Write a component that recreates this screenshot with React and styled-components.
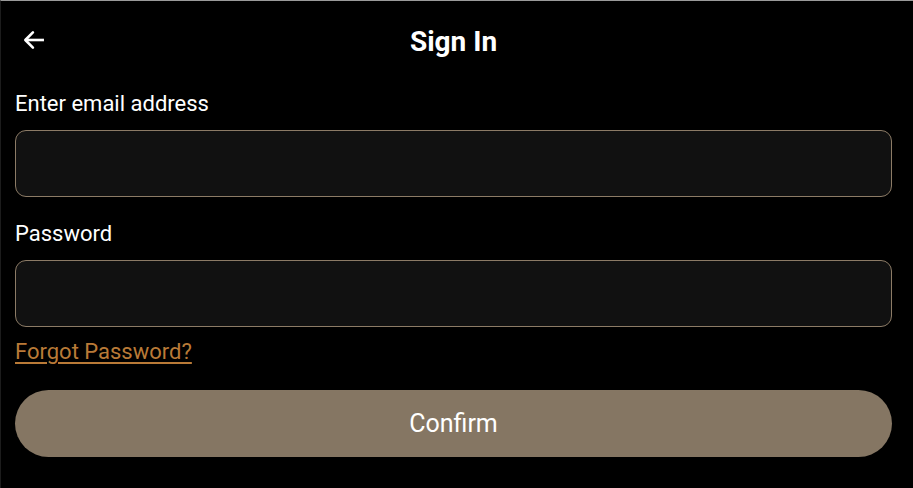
import React from 'react'
import styled, { createGlobalStyle } from 'styled-components'

const GlobalStyle = createGlobalStyle`
  html, body {
    margin: 0;
    padding: 0;
    background: #000;
  }
  body {
    font-family: Roboto, "Noto Sans", sans-serif;
  }
`

const Page = styled.div`
  box-sizing: border-box;
  width: 913px;
  height: 488px;
  background: #000;
  border-top: 1px solid #9a9a9a;
  border-left: 1px solid #1c1c1c;
  padding: 0 21px 0 14px;
  color: #fff;
`

const Header = styled.header`
  position: relative;
  display: flex;
  align-items: center;
  justify-content: center;
  height: 80px;
  margin-bottom: 10px;
`

const BackButton = styled.button`
  position: absolute;
  left: 6px;
  top: 26px;
  background: none;
  border: none;
  padding: 0;
  color: #fff;
  cursor: pointer;
  display: flex;
`

const Title = styled.h1`
  margin: 0;
  font-size: 28px;
  font-weight: 700;
  letter-spacing: 0;
`

const Field = styled.div`
  display: flex;
  flex-direction: column;
  margin-bottom: ${(p) => p.$gap || 0}px;
`

const Label = styled.label`
  font-size: 22px;
  line-height: 26px;
  margin-bottom: 13px;
`

const Input = styled.input`
  box-sizing: border-box;
  width: 100%;
  height: 67px;
  background: #111111;
  border: 1px solid #8c7b66;
  border-radius: 11px;
  color: #fff;
  font-size: 18px;
  padding: 0 16px;
  outline: none;
`

const ForgotLink = styled.a`
  display: inline-block;
  margin-top: 12px;
  font-size: 22px;
  line-height: 26px;
  color: #b97a37;
  text-decoration: underline;
  text-underline-offset: 3px;
  cursor: pointer;
`

const ConfirmButton = styled.button`
  display: block;
  width: 100%;
  height: 67px;
  margin-top: 25px;
  border: none;
  border-radius: 34px;
  background: #857663;
  color: #fff;
  font-family: Roboto, "Noto Sans", sans-serif;
  font-size: 25px;
  cursor: pointer;
`

const ArrowLeft = () => (
  <svg width="26" height="26" viewBox="0 0 24 24" fill="none" stroke="currentColor" strokeWidth="2.4" strokeLinecap="square">
    <path d="M20 12H5" />
    <path d="M11 5l-7 7 7 7" strokeLinecap="round" strokeLinejoin="round" />
  </svg>
)

const App = () => {
  return (
    <Page>
      <GlobalStyle />
      <Header>
        <BackButton aria-label="Back">
          <ArrowLeft />
        </BackButton>
        <Title>Sign In</Title>
      </Header>
      <Field $gap={24}>
        <Label>Enter email address</Label>
        <Input type="email" />
      </Field>
      <Field>
        <Label>Password</Label>
        <Input type="password" />
      </Field>
      <ForgotLink>Forgot Password?</ForgotLink>
      <ConfirmButton>Confirm</ConfirmButton>
    </Page>
  )
}

export default App
